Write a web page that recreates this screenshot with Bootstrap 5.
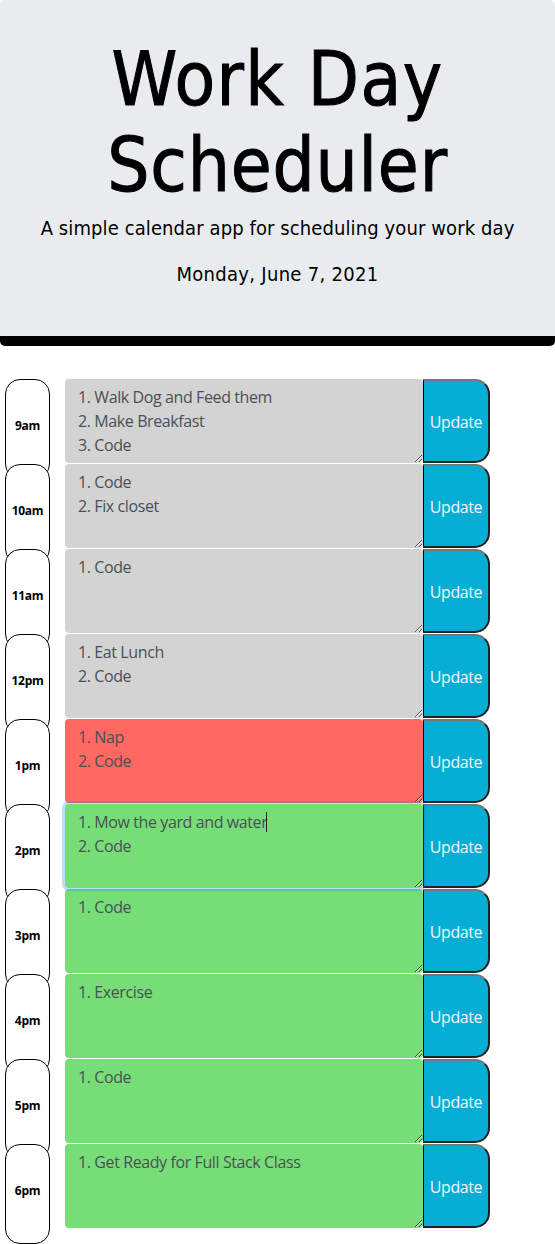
<!DOCTYPE html>
<html lang="en">
<head>
<meta charset="utf-8">
<meta name="viewport" content="width=device-width, initial-scale=1">
<title>Work Day Scheduler</title>
<link rel="stylesheet" href="https://cdn.jsdelivr.net/npm/bootstrap@5.3.0/dist/css/bootstrap.min.css">
<style>
  body { font-family: "Segoe UI", "Open Sans", sans-serif; font-size: 16px; background: #fff; }
  .masthead { height: 346px; padding-top: 36px; background: #e9ecef; border-bottom: 10px solid #000; border-radius: 5px; color: #000; font-family: "Comic Sans MS", "DejaVu Sans Condensed", "DejaVu Sans", sans-serif; font-stretch: condensed; margin-bottom: 33px; }
  .masthead h1 { font-size: 74px; line-height: 86px; font-weight: 400; margin: 0 0 5px; -webkit-text-stroke: 1px #000; }
  .masthead h1 span { display: block; }
  .title-top { letter-spacing: 1.4px; }
  .title-bottom { letter-spacing: .8px; }
  .masthead p { font-size: 20px; line-height: 30px; margin: 0 0 16px; white-space: nowrap; }
  .tagline { letter-spacing: .1px; }
  .today { letter-spacing: .3px; }
  .hours-list { height: 865px; }
  .time-block { height: 85px; padding-left: 5px; }
  .hour { width: 45px; height: 100px; flex: none; margin-right: 15px; border: 1px solid #000; border-radius: 15px; background: #fff; color: #000; font-size: 12px; font-weight: 700; letter-spacing: -.3px; line-height: 18px; padding-top: 37px; text-align: center; }
  .entry { width: 358px; height: 84px; flex: none; border: 0; border-radius: 4px; padding: 6px 13px; color: #495057; line-height: 24px; letter-spacing: -.4px; resize: vertical; overflow: hidden; }
  .entry span { display: block; width: max-content; }
  .past { background: #d3d3d3; }
  .present { background: #ff6961; }
  .future { background: #77dd77; }
  .entry.editing { box-shadow: 0 0 0 3px rgba(0, 123, 255, .25); position: relative; z-index: 1; }
  .caret { position: relative; }
  .caret::after { content: ""; position: absolute; right: 0; top: 2px; width: 1px; height: 20px; background: #222; }
  .save { width: 67px; height: 84px; flex: none; padding: 1px 0 0; border-style: solid; border-width: 2px 2px 2px 1px; border-color: #767676 #212121 #212121 #000; border-radius: 0 15px 15px 0; background: #06aed5; color: #f0f8fa; font-size: 16px; letter-spacing: -.4px; }
</style>
</head>
<body>
<header class="masthead text-center">
  <h1><span class="title-top">Work Day</span><span class="title-bottom">Scheduler</span></h1>
  <p class="tagline">A simple calendar app for scheduling your work day</p>
  <p class="today">Monday, June 7, 2021</p>
</header>
<main class="hours-list">
  <section class="time-block d-flex"><div class="hour">9am</div><div class="entry past"><span>1. Walk Dog and Feed them</span><span>2. Make Breakfast</span><span>3. Code</span></div><button class="save">Update</button></section>
  <section class="time-block d-flex"><div class="hour">10am</div><div class="entry past"><span>1. Code</span><span>2. Fix closet</span></div><button class="save">Update</button></section>
  <section class="time-block d-flex"><div class="hour">11am</div><div class="entry past"><span>1. Code</span></div><button class="save">Update</button></section>
  <section class="time-block d-flex"><div class="hour">12pm</div><div class="entry past"><span>1. Eat Lunch</span><span>2. Code</span></div><button class="save">Update</button></section>
  <section class="time-block d-flex"><div class="hour">1pm</div><div class="entry present"><span>1. Nap</span><span>2. Code</span></div><button class="save">Update</button></section>
  <section class="time-block d-flex"><div class="hour">2pm</div><div class="entry future editing"><span class="caret">1. Mow the yard and water</span><span>2. Code</span></div><button class="save">Update</button></section>
  <section class="time-block d-flex"><div class="hour">3pm</div><div class="entry future"><span>1. Code</span></div><button class="save">Update</button></section>
  <section class="time-block d-flex"><div class="hour">4pm</div><div class="entry future"><span>1. Exercise</span></div><button class="save">Update</button></section>
  <section class="time-block d-flex"><div class="hour">5pm</div><div class="entry future"><span>1. Code</span></div><button class="save">Update</button></section>
  <section class="time-block d-flex"><div class="hour">6pm</div><div class="entry future"><span>1. Get Ready for Full Stack Class</span></div><button class="save">Update</button></section>
</main>
<script src="https://cdn.jsdelivr.net/npm/bootstrap@5.3.0/dist/js/bootstrap.bundle.min.js"></script>
</body>
</html>
